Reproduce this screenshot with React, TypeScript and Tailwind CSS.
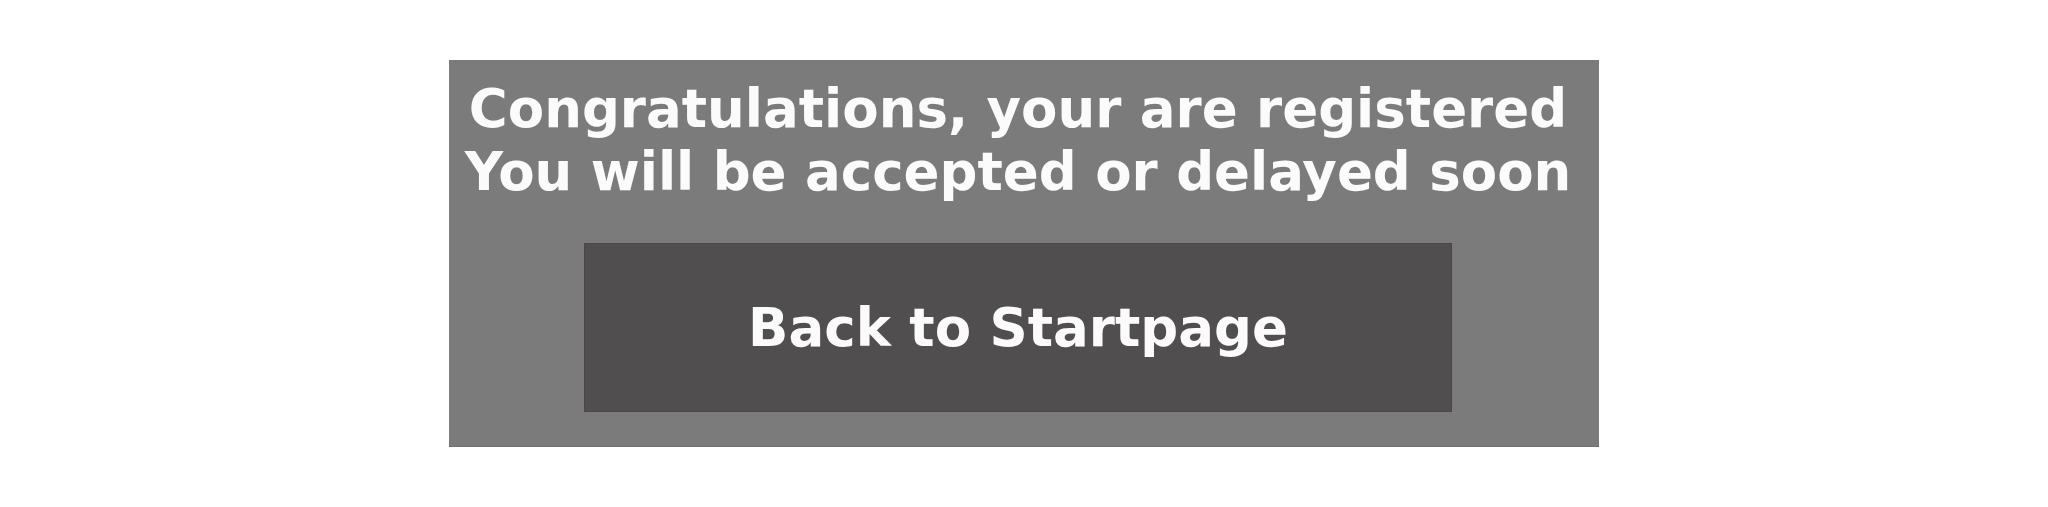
import React from 'react';

const App: React.FC = () => {
  return (
    <div className="w-[2048px] h-[507px] bg-white pt-[60px] font-['DejaVu_Sans',Verdana,sans-serif]">
      <div className="mx-auto w-[1150px] h-[387px] bg-[#7b7b7b] border-b border-[#707070] pt-[17px]">
        {/* Heading */}
        <div className="pr-[12px] text-center text-[#fbfbfb] font-bold text-[53px] leading-[63px]">
          <div>Congratulations, your are registered</div>
          <div>You will be accepted or delayed soon</div>
        </div>

        {/* Button */}
        <button className="mt-[40px] ml-[135px] w-[868px] h-[169px] bg-[#504e4f] border border-[#4a4849] text-[#fbfbfb] font-bold text-[53px] cursor-pointer">
          Back to Startpage
        </button>
      </div>
    </div>
  );
};

export default App;
